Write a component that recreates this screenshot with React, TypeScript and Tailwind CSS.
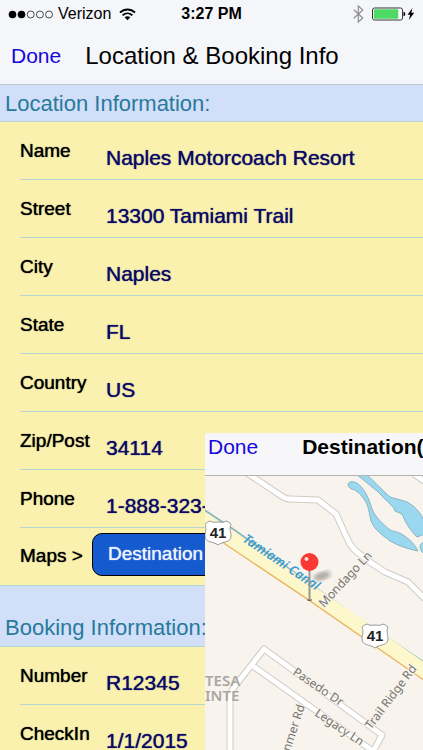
import React from "react";

const location = [
  ["Name", "Naples Motorcoach Resort"],
  ["Street", "13300 Tamiami Trail"],
  ["City", "Naples"],
  ["State", "FL"],
  ["Country", "US"],
  ["Zip/Post", "34114"],
  ["Phone", "1-888-323-4114"],
];

const booking = [
  ["Number", "R12345"],
  ["CheckIn", "1/1/2015"],
];

function Row({ label, value }: { label: string; value: string }) {
  return (
    <div className="ml-5 flex h-[58px] border-b border-[#b5d5d0] whitespace-nowrap">
      <dt className="w-[86px] shrink-0 pt-[17px] text-[19px] leading-6 text-black [text-shadow:0_0_1px]">{label}</dt>
      <dd className="pt-6 text-[21px] leading-6 text-[#0a0a66] [text-shadow:0_0_1px]">{value}</dd>
    </div>
  );
}

function StatusBar() {
  return (
    <div className="grid h-7 grid-cols-3 items-center px-2 text-base text-black">
      <div className="flex items-center gap-1">
        <svg width="46" height="9" viewBox="0 0 46 9" aria-hidden="true">
          <circle cx="4.5" cy="4.5" r="3.8" />
          <circle cx="13.5" cy="4.5" r="3.8" />
          <g fill="none" stroke="#222" strokeWidth="0.8">
            <circle cx="22.7" cy="4.5" r="3.5" />
            <circle cx="31.9" cy="4.5" r="3.5" />
            <circle cx="41" cy="4.5" r="3.5" />
          </g>
        </svg>
        <span>Verizon</span>
        <svg className="ml-1 shrink-0" width="17" height="13" viewBox="0 0 17 13" aria-hidden="true">
          <g fill="none" stroke="#000" strokeWidth="1.9">
            <path d="M1 4.5C5.3.4 11.7.4 16 4.5" />
            <path d="M3.6 7.4c2.9-2.7 6.9-2.7 9.8 0" />
          </g>
          <path d="M5.6 9.3c1.7-1.5 4.1-1.5 5.8 0L8.5 12.2z" />
        </svg>
      </div>
      <div className="text-center font-bold">3:27 PM</div>
      <div className="flex items-center justify-end gap-2">
        <svg width="11" height="18" viewBox="0 0 11 18" fill="none" stroke="#8e8e93" strokeWidth="1.2" aria-hidden="true">
          <path d="M.8 4.700l9 8.300-4.500 4V1l4.500 4-9 8.300" />
        </svg>
        <svg width="43" height="14" viewBox="0 0 43 14" aria-hidden="true">
          <rect x=".5" y="1" width="30" height="12" rx="2" fill="#fff" stroke="#333" strokeWidth="1" />
          <rect x="1.8" y="2.2" width="24.5" height="9.6" rx="1" fill="#4cd964" />
          <path d="M31.5 4.8c2.4 0 2.4 4.4 0 4.4z" />
          <path d="M40.5 1l-5 6.8h2.7L36.8 13l5.4-7.2h-2.9z" />
        </svg>
      </div>
    </div>
  );
}

function Shield({ x, y }: { x: number; y: number }) {
  return (
    <g transform={`translate(${x} ${y})`}>
      <path
        d="M-8-12C-5-10-3-11 0-11C3-11 5-10 8-12Q11-11 13-9C11-4 13-1 13 3C13 10 5 8 0 12C-5 8-13 10-13 3C-13-1-11-4-13-9Q-11-11-8-12Z"
        fill="#fff"
        stroke="#999"
        strokeWidth="1"
      />
      <text y="5" textAnchor="middle" fontFamily="'Liberation Sans', sans-serif" fontSize="15" fontWeight="700" fill="#222">41</text>
    </g>
  );
}

function DestinationMap() {
  const roads = [
    "M245 472L250 475L283 497Q286 499 290 499L318 500L336 514L347 538Q350 546 357 552Q370 563 385 572L408 582L425 599",
    "M230 755V700Q230 692 235 686L264 649L382 735L374 750L369 757",
    "M253 666L370 749L384 759",
    "M414 474L427 483",
  ];
  return (
    <svg
      className="block min-h-0 w-full flex-1"
      viewBox="205 476 218 274"
      preserveAspectRatio="xMinYMin slice"
      fontFamily="'Noto Sans', sans-serif"
      role="img"
      aria-label="Map of the destination"
    >
      <defs>
        <filter id="soft"><feGaussianBlur stdDeviation="2" /></filter>
      </defs>
      <rect x="205" y="476" width="218" height="274" fill="#f8f4ed" />
      <g fill="#9ad8f0" stroke="#8ab4c0" strokeWidth="1">
        <path d="M348 485C348 481 353 481 357 483C364 488 369 498 372 509C375 517 383 524 390 530C395 532 399 532 403 535C409 539 414 543 418 551C408 549 399 546 390 541C384 536 375 531 371 521C369 513 369 506 364 499Q360 493 355 490Q349 489 348 485Z" />
        <path d="M356 474H366C375 482 382 490 390 497C396 499 402 500 407 502C414 506 419 510 425 522V534L417 537C411 531 406 524 402 514L395 511Q394 507 391 505L377 491Z" />
        <path d="M425 542Q420 543 420 547T425 555Z" />
      </g>
      <g fill="none" strokeLinejoin="round">
        {roads.map((d) => <path key={d} d={d} stroke="#cfcbc5" strokeWidth="7" />)}
        {roads.map((d) => <path key={d} d={d} stroke="#fff" strokeWidth="5" />)}
        <path d="M200 507L236 531L316 588L366 624L425 663" stroke="#8fb9b4" strokeWidth="2" />
        <path d="M200 519L312 594L430 676" stroke="#e9b45c" strokeWidth="15" />
        <path d="M200 518L312 593L430 675" stroke="#fdf8cc" strokeWidth="14" />
      </g>
      <g fill="#77736f" fontSize="12" stroke="#f8f4ed" strokeWidth="2" paintOrder="stroke">
        <text transform="translate(324 608) rotate(-47)">Mondago Ln</text>
        <text transform="translate(292 674) rotate(34)">Pasedo Dr</text>
        <text transform="translate(314 715) rotate(34)">Legacy Ln</text>
        <text transform="translate(371 730) rotate(-53)">Trail Ridge Rd</text>
        <text transform="translate(290 752) rotate(-72)">nmer Rd</text>
      </g>
      <g fill="#aaa7a2" fontSize="15" fontWeight="600">
        <text x="205" y="686">TESA</text>
        <text x="205" y="701">INTE</text>
      </g>
      <text transform="translate(242 541) rotate(34)" fontSize="13" fontWeight="600" fontStyle="italic" fill="#3a9bd0">Tamiami Canal</text>
      <Shield x={218} y={533} />
      <Shield x={375} y={636} />
      <ellipse cx="322" cy="576" rx="9" ry="4" fill="#777" opacity="0.6" transform="rotate(-18 322 576)" filter="url(#soft)" />
      <ellipse cx="309.5" cy="600" rx="2.5" ry="1" fill="#666" />
      <path d="M309.5 568V600" stroke="#999" strokeWidth="2" />
      <circle cx="309.5" cy="562" r="9" fill="#fa3a32" />
      <circle cx="306.5" cy="559" r="2" fill="#fdd" />
    </svg>
  );
}

export default function App() {
  return (
    <main className="relative h-screen overflow-hidden bg-[#fbf1ae] font-['Liberation_Sans',Arial,sans-serif]">
      <header className="h-[85px] border-b border-[#bcc5d2] bg-[#f4f6fa]">
        <StatusBar />
        <div className="flex h-14 items-center gap-6 px-[11px] whitespace-nowrap">
          <button type="button" className="text-[21px] leading-7 text-[#1508e0]">Done</button>
          <h1 className="text-2xl leading-7 text-black">Location &amp; Booking Info</h1>
        </div>
      </header>
      <section>
        <h2 className="flex h-[37px] items-center border-b border-[#b5d5d0] bg-[#d2dff9] px-[5px] text-[22px] text-[#287a9c]">
          Location Information:
        </h2>
        <dl>
          {location.map(([label, value]) => <Row key={label} label={label} value={value} />)}
        </dl>
        <div className="flex h-[57px] items-center pb-1 pl-5 whitespace-nowrap">
          <span className="w-[72px] pt-1 text-[19px] text-black [text-shadow:0_0_1px]">Maps &gt;</span>
          <button type="button" className="h-[43px] rounded-[10px] border border-black bg-[#165ad0] px-[15px] text-[19px] text-[#eef3ff] [text-shadow:0_0_1px]">
            Destination
          </button>
        </div>
      </section>
      <section>
        <h2 className="flex h-[62px] items-end border-y border-[#b5d5d0] bg-[#d2dff9] px-[5px] pb-1 text-[22px] leading-7 text-[#287a9c]">
          Booking Information:
        </h2>
        <dl>
          {booking.map(([label, value]) => <Row key={label} label={label} value={value} />)}
        </dl>
      </section>
      <aside className="absolute top-[433px] right-0 bottom-0 left-[205px] flex flex-col overflow-hidden">
        <div className="flex h-[43px] shrink-0 items-start gap-11 border-b border-[#b5b5b5] bg-[#f7f7f9] px-[3px] whitespace-nowrap">
          <button type="button" className="text-[21px] leading-7 text-[#1508e0]">Done</button>
          <h2 className="text-[21px] leading-7 font-bold text-black">Destination(</h2>
        </div>
        <DestinationMap />
      </aside>
    </main>
  );
}
